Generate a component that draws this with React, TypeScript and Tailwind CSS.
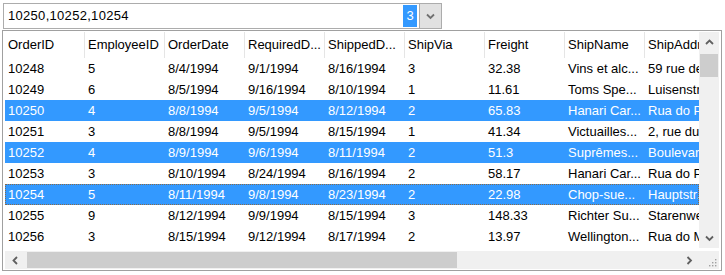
import React from 'react';

const columns = ['OrderID', 'EmployeeID', 'OrderDate', 'RequiredD...', 'ShippedD...', 'ShipVia', 'Freight', 'ShipName', 'ShipAddress'];

const rows: string[][] = [
  ['10248', '5', '8/4/1994', '9/1/1994', '8/16/1994', '3', '32.38', 'Vins et alc...', "59 rue de l'Abbaye"],
  ['10249', '6', '8/5/1994', '9/16/1994', '8/10/1994', '1', '11.61', 'Toms Spe...', 'Luisenstr. 48'],
  ['10250', '4', '8/8/1994', '9/5/1994', '8/12/1994', '2', '65.83', 'Hanari Car...', 'Rua do Paço, 67'],
  ['10251', '3', '8/8/1994', '9/5/1994', '8/15/1994', '1', '41.34', 'Victuailles...', '2, rue du Commerce'],
  ['10252', '4', '8/9/1994', '9/6/1994', '8/11/1994', '2', '51.3', 'Suprêmes...', 'Boulevard Tirou, 255'],
  ['10253', '3', '8/10/1994', '8/24/1994', '8/16/1994', '2', '58.17', 'Hanari Car...', 'Rua do Paço, 67'],
  ['10254', '5', '8/11/1994', '9/8/1994', '8/23/1994', '2', '22.98', 'Chop-sue...', 'Hauptstr. 31'],
  ['10255', '9', '8/12/1994', '9/9/1994', '8/15/1994', '3', '148.33', 'Richter Su...', 'Starenweg 5'],
  ['10256', '3', '8/15/1994', '9/12/1994', '8/17/1994', '2', '13.97', 'Wellington...', 'Rua do Mercado, 12'],
];

const selected = ['10250', '10252', '10254'];
const current = '10254';

function Chevron({ dir, className }: { dir: 'up' | 'down' | 'left' | 'right'; className?: string }) {
  const pts = {
    up: '1,6 4.5,2.5 8,6',
    down: '1,2.5 4.5,6 8,2.5',
    left: '6,1 2.5,4.5 6,8',
    right: '2.5,1 6,4.5 2.5,8',
  }[dir];
  return (
    <svg width="9" height="9" viewBox="0 0 9 9" className={className}>
      <polyline points={pts} fill="none" stroke="currentColor" strokeWidth="1.8" />
    </svg>
  );
}

export default function App() {
  return (
    <div className="w-[725px] h-[275px] bg-white text-black text-[13px]" style={{ fontFamily: '"Liberation Sans", Arial, sans-serif' }}>
      {/* Multi-select combo */}
      <div className="pt-[3px] pl-[3px] flex">
        <div className="w-[417px] h-[26px] border border-[#acacac] flex items-center pl-[4px] pr-[2px]">
          <span className="flex-1 tracking-[0.3px]">10250,10252,10254</span>
          <span className="w-[14px] h-[22px] bg-[#3399ff] text-white flex items-center justify-center">3</span>
        </div>
        <div className="w-[22px] h-[26px] border border-l-0 border-[#acacac] bg-[#e1e1e1] flex items-center justify-center text-[#707070]">
          <Chevron dir="down" />
        </div>
      </div>

      {/* Grid */}
      <div className="ml-[2px] mt-px w-[720px] h-[241px] border border-[#a0a0a0] py-px px-[2px] flex flex-col">
        <div className="flex flex-1 min-h-0">
          <div className="flex-1 overflow-hidden">
            <div className="flex h-[26px]">
              {columns.map((c) => (
                <div key={c} className="w-[80px] shrink-0 px-[3px] flex items-center border-r border-[#e5e5e5] whitespace-nowrap overflow-hidden">
                  {c}
                </div>
              ))}
            </div>
            {rows.map((r) => {
              const sel = selected.includes(r[0]);
              return (
                <div
                  key={r[0]}
                  className={`flex h-[21px] items-center ${sel ? 'bg-[#3399ff] text-white' : ''} ${r[0] === current ? 'outline-1 outline-dotted outline-[#8a6a48] -outline-offset-1' : ''}`}
                >
                  {r.map((v, i) => (
                    <div key={i} className="w-[80px] shrink-0 px-[3px] whitespace-nowrap overflow-hidden">
                      {v}
                    </div>
                  ))}
                </div>
              );
            })}
          </div>
          {/* vertical scrollbar */}
          <div className="w-[20px] bg-[#f0f0f0] flex flex-col items-center text-[#606060]">
            <div className="h-[20px] flex items-center justify-center">
              <Chevron dir="up" />
            </div>
            <div className="w-[18px] h-[23px] mt-[2px] bg-[#cdcdcd]" />
            <div className="flex-1" />
            <div className="h-[20px] flex items-center justify-center">
              <Chevron dir="down" />
            </div>
          </div>
        </div>
        {/* horizontal scrollbar */}
        <div className="h-[18px] mt-[3px] flex">
          <div className="flex-1 bg-[#f0f0f0] flex items-center text-[#606060]">
            <div className="w-[20px] flex items-center justify-center">
              <Chevron dir="left" />
            </div>
            <div className="w-[430px] h-[16px] ml-[2px] bg-[#cdcdcd]" />
            <div className="flex-1" />
            <div className="w-[20px] flex items-center justify-center">
              <Chevron dir="right" />
            </div>
          </div>
          <div className="w-[20px] bg-[#f0f0f0] flex items-end justify-end p-[2px]">
            <svg width="10" height="10" viewBox="0 0 10 10">
              {[
                [8, 2], [8, 5], [5, 5], [8, 8], [5, 8], [2, 8],
              ].map(([x, y], i) => (
                <rect key={i} x={x} y={y} width="1.4" height="1.4" fill="#a0a0a0" />
              ))}
            </svg>
          </div>
        </div>
      </div>
    </div>
  );
}
